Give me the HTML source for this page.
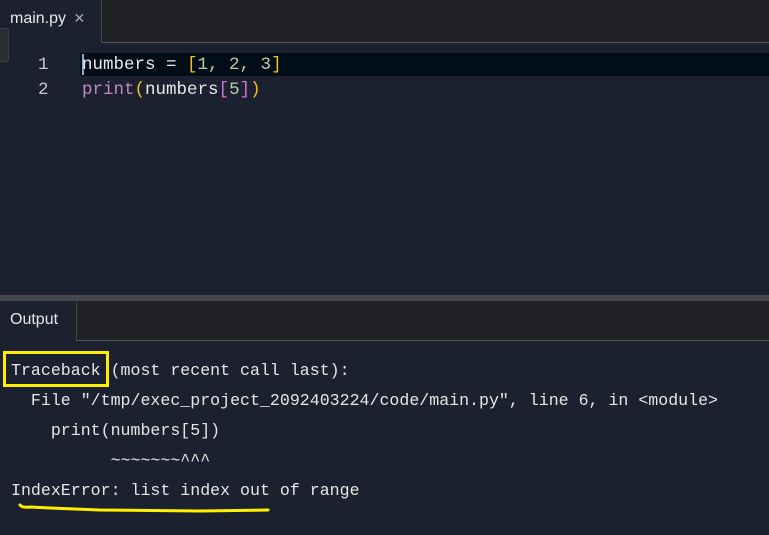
<!DOCTYPE html>
<html><head><style>
body{margin:0;width:769px;height:535px;overflow:hidden;background:#1c2130;position:relative;font-family:"Liberation Sans",sans-serif}
.abs{position:absolute}
.mono{font-family:"Liberation Mono",monospace;white-space:pre}
</style></head><body>
<div class="abs" style="left:101px;top:0;width:668px;height:42px;background:#202124;border-left:1px solid #444;border-bottom:1px solid #555"></div>
<div class="abs" style="left:10px;top:10px;font-size:16px;color:#e6e6e6">main.py <span style="color:#aaa;font-size:14px;margin-left:3px">✕</span></div>
<div class="abs" style="left:0;top:28px;width:8px;height:32px;background:#2a2d33;border:1px solid #3a3d44;border-left:none;border-radius:0 2px 2px 0"></div>
<div class="abs" style="left:80px;top:53px;width:689px;height:23px;background:#010d17"></div>
<div class="abs" style="left:82px;top:54px;width:2px;height:21px;background:#8fa8c8"></div>
<div class="abs mono" style="left:38px;top:53px;font-size:17.5px;line-height:25px;color:#c8c8c8">1
2</div>
<div class="abs mono" style="left:82px;top:53px;font-size:17.5px;line-height:25px;color:#e8e8e8">numbers = <span style="color:#f0c020">[</span><span style="color:#b5cea8">1, 2, 3</span><span style="color:#f0c020">]</span>
<span style="color:#c586c0">print</span><span style="color:#f0c020">(</span>numbers<span style="color:#d070d0">[</span><span style="color:#b5cea8">5</span><span style="color:#d070d0">]</span><span style="color:#f0c020">)</span></div>
<div class="abs" style="left:0;top:295px;width:769px;height:6px;background:#45474c"></div>
<div class="abs" style="left:76px;top:301px;width:693px;height:39px;background:#202124;border-left:1px solid #444;border-bottom:1px solid #555"></div>
<div class="abs" style="left:10px;top:311px;font-size:16px;color:#e6e6e6">Output</div>
<div class="abs mono" style="left:11px;top:356px;font-size:16.6px;line-height:30px;color:#e6e6e6">Traceback (most recent call last):
  File "/tmp/exec_project_2092403224/code/main.py", line 6, in &lt;module&gt;
    print(numbers[5])
          ~~~~~~~^^^
IndexError: list index out of range</div>
<div class="abs" style="left:3px;top:351px;width:106px;height:36px;border:3px solid #ffef00;box-sizing:border-box"></div>
<svg class="abs" style="left:0;top:495px" width="300" height="30"><path d="M20 10 Q22 13 30 12 L50 13 L100 15 L200 16 L268 15" stroke="#ffef00" stroke-width="3" fill="none" stroke-linecap="round"/></svg>
</body></html>
